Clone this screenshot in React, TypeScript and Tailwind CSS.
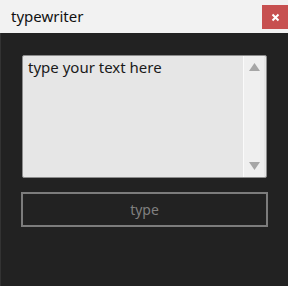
import React from 'react';

const App: React.FC = () => {
  return (
    <div className="w-[288px] h-[286px] flex flex-col bg-[#222222] overflow-hidden" style={{ fontFamily: '"Noto Sans", "Open Sans", sans-serif' }}>
      <div className="h-[33px] bg-[#f2f2f2] flex items-center justify-between shrink-0">
        <span className="pl-[11px] text-[15px] text-[#111] leading-none -mt-[1px]">typewriter</span>
        <div className="w-[26px] h-[24px] mt-[1px] bg-[#c75050] flex items-center justify-center">
          <svg width="9" height="9" viewBox="0 0 9 9">
            <path d="M1.5 1.5 L7.5 7.5 M7.5 1.5 L1.5 7.5" stroke="#fff" strokeWidth="2" />
          </svg>
        </div>
      </div>
      <div className="flex-1 border-l border-[#333] flex flex-col pl-[20px] pr-[20px] pt-[22px]">
        <div className="mx-[1px] h-[123px] bg-[#e6e6e6] border border-[#8c8c8c] rounded-[2px] flex">
          <div className="flex-1 pl-[5px] pt-[1px] text-[15px] text-[#1a1a1a] leading-[20px]">type your text here</div>
          <div className="w-[21px] bg-[#efefef] border-l border-[#fafafa] flex flex-col items-center justify-between py-[7px] mr-[2px]">
            <svg width="11" height="8" viewBox="0 0 11 8"><path d="M5.5 0 L11 8 L0 8 Z" fill="#a6a6a6" /></svg>
            <svg width="11" height="8" viewBox="0 0 11 8"><path d="M0 0 L11 0 L5.5 8 Z" fill="#a6a6a6" /></svg>
          </div>
        </div>
        <div className="mt-[14px] h-[35px] border-2 border-[#7c7c7c] flex items-center justify-center text-[14px] text-[#808080]">
          type
        </div>
      </div>
    </div>
  );
};

export default App;
